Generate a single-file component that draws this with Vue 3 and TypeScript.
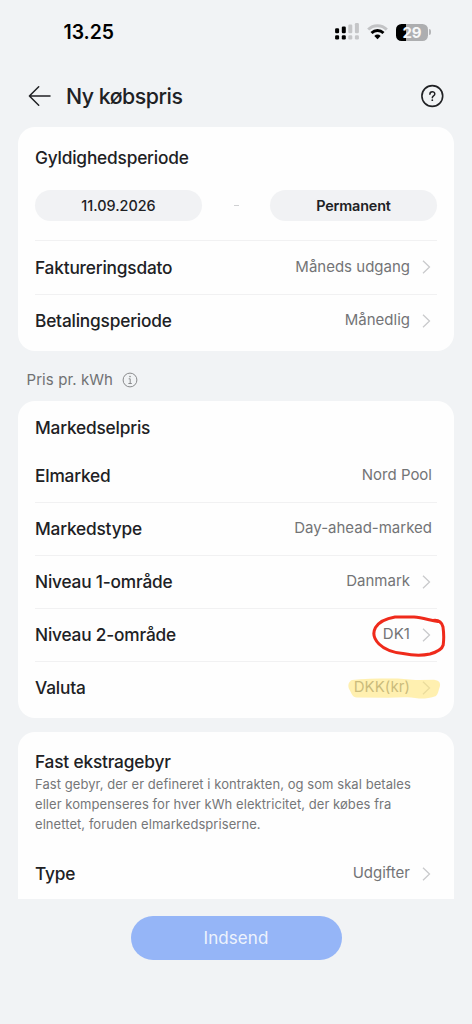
<script setup lang="ts">
interface Row {
  label: string
  value: string
  link: boolean
  mark?: 'circle' | 'highlight'
}

const periodRows: Row[] = [
  { label: 'Faktureringsdato', value: 'Måneds udgang', link: true },
  { label: 'Betalingsperiode', value: 'Månedlig', link: true },
]

const marketRows: Row[] = [
  { label: 'Elmarked', value: 'Nord Pool', link: false },
  { label: 'Markedstype', value: 'Day-ahead-marked', link: false },
  { label: 'Niveau 1-område', value: 'Danmark', link: true },
  { label: 'Niveau 2-område', value: 'DK1', link: true, mark: 'circle' },
  { label: 'Valuta', value: 'DKK(kr)', link: true, mark: 'highlight' },
]

const feeRows: Row[] = [{ label: 'Type', value: 'Udgifter', link: true }]

const feeLines: string[] = [
  'Fast gebyr, der er defineret i kontrakten, og som skal betales',
  'eller kompenseres for hver kWh elektricitet, der købes fra',
  'elnettet, foruden elmarkedspriserne.',
]
</script>

<template>
  <div class="screen">
    <div class="status">
      <span class="time">13.25</span>
      <div class="status-icons">
        <svg class="signal" width="26" height="18" viewBox="0 0 26 18">
          <g fill="#000">
            <rect x="1.1" y="5.2" width="4" height="5" rx="1.2" />
            <rect x="1.1" y="12.3" width="4" height="4.2" rx="1.2" />
            <rect x="7.8" y="3.6" width="4" height="6.6" rx="1.2" />
            <rect x="7.8" y="12.3" width="4" height="4.2" rx="1.2" />
          </g>
          <g fill="#c5c6c8">
            <rect x="14.3" y="1.6" width="4" height="8.6" rx="1.2" />
            <rect x="14.3" y="12.3" width="4" height="4.2" rx="1.2" />
            <rect x="20.9" y="0" width="4" height="10.2" rx="1.2" />
            <rect x="20.9" y="12.3" width="4" height="4.2" rx="1.2" />
          </g>
        </svg>
        <svg class="wifi" width="21" height="16" viewBox="0 0 21 16" fill="none">
          <path d="M1.2 5.6C6.2 0.5 14.6 0.5 19.8 5.6" stroke="#c2c3c5" stroke-width="2.9" />
          <path d="M4.5 9.1C8 5.6 13 5.6 16.5 9.1" stroke="#000" stroke-width="2.8" />
          <path d="M7.3 11.9C9.1 10.1 11.9 10.1 13.7 11.9L10.5 15.2Z" fill="#000" />
        </svg>
        <div class="battery">
          <span class="battery-body">29</span>
          <span class="battery-tip"></span>
        </div>
      </div>
    </div>

    <header class="header">
      <svg width="24" height="22" viewBox="0 0 24 22" fill="none" stroke="#202124" stroke-width="1.5" stroke-linecap="round" stroke-linejoin="round">
        <path d="M10.7 1.7L1.4 11L10.7 20.2M1.4 11H22" />
      </svg>
      <h1 class="title">Ny købspris</h1>
      <svg class="help" width="24" height="24" viewBox="0 0 24 24" fill="none" stroke="#202124" stroke-linecap="round">
        <circle cx="12.3" cy="12" r="10.4" stroke-width="1.6" />
        <path d="M9.9 10.2C9.9 6.9 14.8 7 14.8 9.9C14.8 11.9 12.3 11.8 12.3 13.7" stroke-width="1.5" />
        <circle cx="12.3" cy="16.2" r="0.9" fill="#202124" stroke="none" />
      </svg>
    </header>

    <main class="content">
      <section class="card">
        <h2 class="heading period-heading">Gyldighedsperiode</h2>
        <div class="range">
          <span class="pill">11.09.2026</span>
          <span class="dash"></span>
          <span class="pill permanent">Permanent</span>
        </div>
        <div v-for="row in periodRows" :key="row.label" class="row">
          <span class="label">{{ row.label }}</span>
          <span class="value">{{ row.value }}</span>
          <svg class="chevron" width="9" height="14" viewBox="0 0 9 14"><path d="M1 0.8L7.5 7L1 13.2" /></svg>
        </div>
      </section>

      <div class="caption">
        <span>Pris pr. kWh</span>
        <svg width="16" height="16" viewBox="0 0 16 16" fill="none" stroke="#898a8c">
          <circle cx="8" cy="8" r="6.9" stroke-width="1" />
          <path d="M6.7 6.8H8.2V11.4M6.4 11.5H9.8" stroke-width="1" />
          <circle cx="8" cy="4.6" r="0.8" fill="#898a8c" stroke="none" />
        </svg>
      </div>

      <section class="card">
        <h2 class="heading market-heading">Markedselpris</h2>
        <div v-for="(row, i) in marketRows" :key="row.label" class="row" :class="{ first: i === 0 }">
          <span class="label">{{ row.label }}</span>
          <span class="value" :class="{ plain: !row.link, code: row.mark }">{{ row.value }}</span>
          <svg v-if="row.link" class="chevron" width="9" height="14" viewBox="0 0 9 14"><path d="M1 0.8L7.5 7L1 13.2" /></svg>
          <svg v-if="row.mark === 'circle'" class="ring" width="76" height="46" viewBox="370 613 76 46">
            <path d="M438 621.5C430 620.5 423 617.5 414 617H395C386 618.5 379 622 375.5 627.5C372.5 633 374 639 379 644C385 650 393 652.5 403 653.5C413 655.5 423 655.5 430 654C437 652 442 649.5 443.2 645C444 639 443.7 632 443 627C441.5 621.5 438 619.8 433 620.5" />
          </svg>
          <svg v-if="row.mark === 'highlight'" class="marker" width="94" height="24" viewBox="347 676 94 24">
            <path d="M352 680C363 678.7 376 678.6 391 678.5C402 678 408 680 419 680L434 679.8C440 680.5 441 684 439.5 687.5C438.5 690.5 438 694 436 696C430 698 424 698.8 419 698.5C408 696.5 398 697.5 388 697.7L357 697.5C352 697 352 694 349.7 690C347.5 686.5 348 682 352 680Z" />
          </svg>
        </div>
      </section>

      <section class="card fee">
        <h2 class="heading fee-heading">Fast ekstragebyr</h2>
        <p class="description">
          <span v-for="line in feeLines" :key="line">{{ line }}</span>
        </p>
        <div v-for="row in feeRows" :key="row.label" class="row first">
          <span class="label">{{ row.label }}</span>
          <span class="value">{{ row.value }}</span>
          <svg class="chevron" width="9" height="14" viewBox="0 0 9 14"><path d="M1 0.8L7.5 7L1 13.2" /></svg>
        </div>
      </section>
    </main>

    <footer class="footer">
      <button class="submit" type="button">Indsend</button>
    </footer>
  </div>
</template>

<style>
body {
  background: #f1f3f5;
}
</style>

<style scoped>
.screen {
  box-sizing: border-box;
  width: 472px;
  height: 1024px;
  overflow: hidden;
  display: flex;
  flex-direction: column;
  background: #f1f3f5;
  color: #202124;
  font-family: Inter, "Liberation Sans", sans-serif;
}
.status {
  height: 64px;
  box-sizing: border-box;
  padding: 0 41px 0 63.5px;
  display: flex;
  align-items: center;
  justify-content: space-between;
}
.time {
  font-size: 19.4px;
  font-weight: 600;
  letter-spacing: -0.05px;
  color: #000;
}
.status-icons {
  display: flex;
  align-items: center;
}
.wifi {
  margin: 0 8px 0 7px;
}
.battery {
  display: flex;
  align-items: center;
  gap: 1px;
}
.battery-body {
  width: 32px;
  height: 17px;
  border-radius: 5.5px;
  background: linear-gradient(90deg, #000 10px, #adaeb0 10px);
  color: #f6f7f8;
  font-size: 15px;
  font-weight: 700;
  line-height: 17px;
  text-align: center;
}
.battery-tip {
  width: 2px;
  height: 6px;
  border-radius: 0 2px 2px 0;
  background: #b5b6b8;
}
.header {
  box-sizing: border-box;
  height: 62.5px;
  flex: none;
  display: flex;
  align-items: center;
  padding: 1px 28px 0 28px;
}
.title {
  margin: 0 auto 0 14px;
  font-size: 21.3px;
  font-weight: 500;
  line-height: 26px;
  letter-spacing: -0.47px;
}
.content {
  flex: none;
  height: 772.5px;
  overflow: hidden;
  padding: 0 18px;
}
.card {
  box-sizing: border-box;
  background: #fefefe;
  border-radius: 17px;
  padding: 0 17px 4px;
}
.heading {
  margin: 0;
  font-size: 17.3px;
  font-weight: 500;
  line-height: 24px;
  letter-spacing: -0.19px;
}
.period-heading {
  padding-top: 19.5px;
}
.market-heading {
  padding: 15px 0 9px;
}
.fee-heading {
  padding-top: 18px;
}
.range {
  display: flex;
  align-items: center;
  justify-content: space-between;
  padding: 20px 0 19px;
}
.range + .row {
  height: 53.5px;
}
.pill {
  width: 167px;
  height: 31px;
  border-radius: 16px;
  background: #f1f2f4;
  text-align: center;
  line-height: 31px;
  font-size: 14.4px;
  font-weight: 500;
}
.permanent {
  font-weight: 600;
  letter-spacing: -0.15px;
}
.dash {
  width: 5px;
  height: 1px;
  background: #cfd0d2;
}
.row {
  position: relative;
  height: 53px;
  box-sizing: border-box;
  border-top: 1px solid #f1f1f2;
  display: flex;
  align-items: center;
}
.row.first {
  border-top-color: transparent;
}
.label {
  flex: 1;
  font-size: 17.3px;
  font-weight: 500;
  letter-spacing: -0.19px;
}
.value {
  margin: -2px 12px 0 0;
  font-size: 15px;
  color: #737476;
}
.plain {
  margin-right: 5px;
}
.code {
  letter-spacing: 0.08px;
}
.chevron {
  margin-right: 6px;
  fill: none;
  stroke: #c9cacc;
  stroke-width: 1.3;
}
.ring {
  position: absolute;
  right: -9px;
  top: 4px;
  fill: none;
  stroke: #ef2a1b;
  stroke-width: 3;
  stroke-linecap: round;
  stroke-linejoin: round;
}
.marker {
  position: absolute;
  right: -4px;
  top: 14px;
  fill: #ffe680;
  fill-opacity: 0.62;
}
.caption {
  box-sizing: border-box;
  height: 50px;
  display: flex;
  align-items: center;
  gap: 9px;
  padding: 8px 0 0 8.5px;
  font-size: 15px;
  letter-spacing: 0.08px;
  color: #707173;
}
.fee {
  margin-top: 14px;
  padding-bottom: 40px;
}
.description {
  margin: 0 0 13px;
  display: flex;
  flex-direction: column;
  font-size: 13px;
  line-height: 20px;
  letter-spacing: 0.06px;
  color: #757678;
}
.footer {
  display: flex;
  justify-content: center;
  padding-top: 17px;
}
.submit {
  width: 211px;
  height: 44px;
  border: 0;
  border-radius: 22px;
  background: #95b5f7;
  color: #eef3fd;
  font-family: inherit;
  font-size: 17px;
  letter-spacing: 0.1px;
}
</style>
